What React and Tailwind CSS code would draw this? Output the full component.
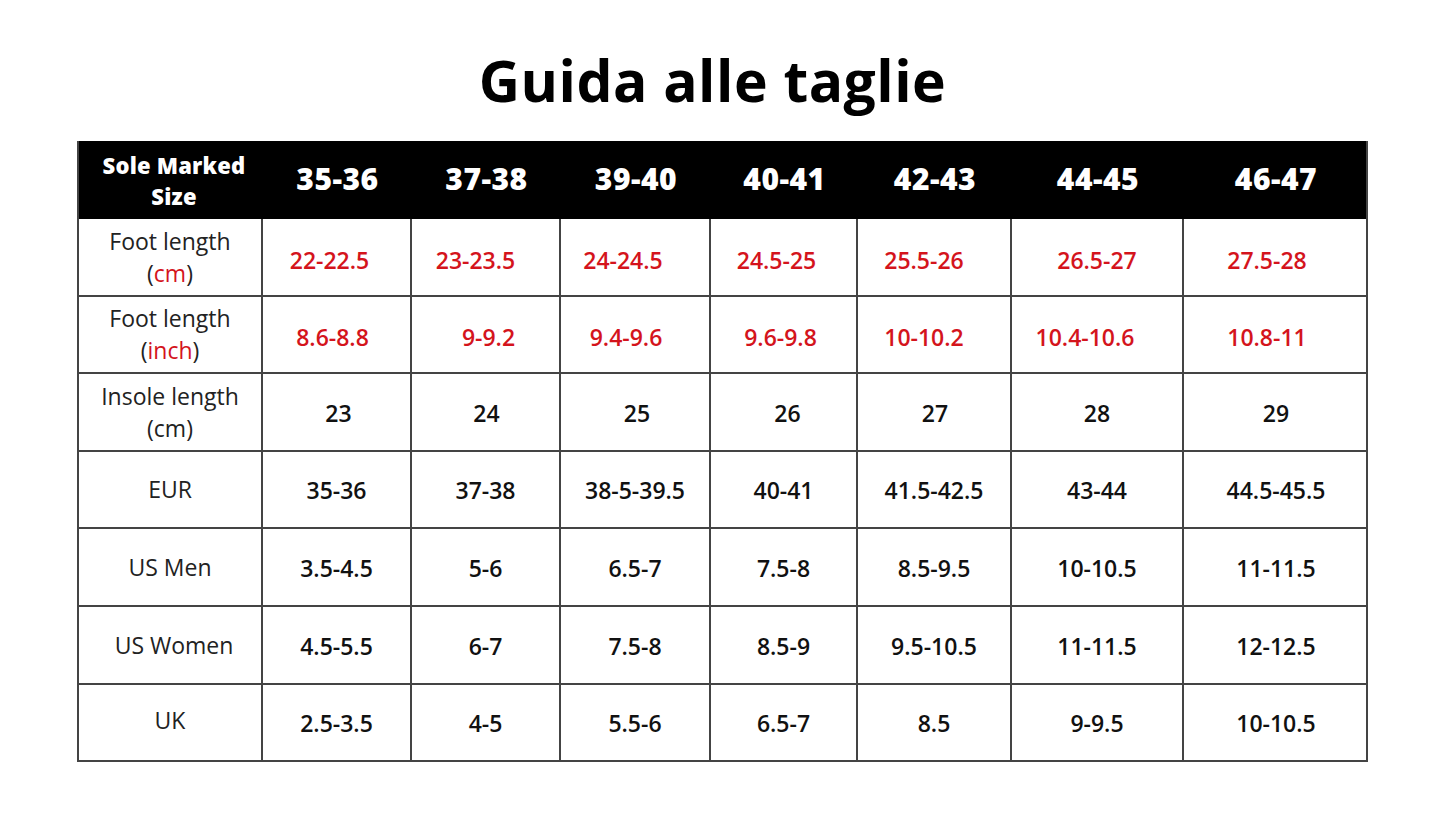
const sizes = ['35-36', '37-38', '39-40', '40-41', '42-43', '44-45', '46-47'];

// small nudges so values sit where they do in the printed chart
const cmShift = ['pr-[14px]', 'pr-[20px]', 'pr-[24px]', 'pr-[14px]', 'pr-[20px]', '', 'pr-[18px]'];
const inchShift = ['pr-[8px]', 'pl-[6px]', 'pr-[18px]', 'pr-[6px]', 'pr-[20px]', 'pr-[24px]', 'pr-[18px]'];
const plainShift = ['pl-[4px]', 'pl-[2px]', 'pl-[4px]', 'pl-[8px]', 'pl-[2px]', '', ''];

const rows = [
  {
    label: ['Foot length', '(', 'cm', ')'],
    red: true,
    shift: cmShift,
    values: ['22-22.5', '23-23.5', '24-24.5', '24.5-25', '25.5-26', '26.5-27', '27.5-28'],
  },
  {
    label: ['Foot length', '(', 'inch', ')'],
    red: true,
    shift: inchShift,
    values: ['8.6-8.8', '9-9.2', '9.4-9.6', '9.6-9.8', '10-10.2', '10.4-10.6', '10.8-11'],
  },
  { label: ['Insole length', '(cm)'], shift: plainShift, values: ['23', '24', '25', '26', '27', '28', '29'] },
  { label: ['EUR'], values: ['35-36', '37-38', '38-5-39.5', '40-41', '41.5-42.5', '43-44', '44.5-45.5'] },
  { label: ['US Men'], values: ['3.5-4.5', '5-6', '6.5-7', '7.5-8', '8.5-9.5', '10-10.5', '11-11.5'] },
  { label: ['US Women'], pad: 'pl-[8px]', values: ['4.5-5.5', '6-7', '7.5-8', '8.5-9', '9.5-10.5', '11-11.5', '12-12.5'] },
  { label: ['UK'], pad: 'pb-[4px]', values: ['2.5-3.5', '4-5', '5.5-6', '6.5-7', '8.5', '9-9.5', '10-10.5'] },
];

const grid = 'grid grid-cols-[184px_149px_149px_150px_147px_154px_172px_184px]';

function Label({ label }) {
  if (label.length === 4) {
    return (
      <div className="flex flex-col items-center leading-[32px]">
        <span>{label[0]}</span>
        <span>
          {label[1]}
          <span className="text-[#d4141c]">{label[2]}</span>
          {label[3]}
        </span>
      </div>
    );
  }
  if (label.length === 2) {
    return (
      <div className="flex flex-col items-center leading-[32px]">
        <span>{label[0]}</span>
        <span>{label[1]}</span>
      </div>
    );
  }
  return <span>{label[0]}</span>;
}

export default function App() {
  return (
    <div className="w-[1445px] h-[813px] bg-white overflow-hidden font-['Open_Sans',sans-serif]">
      <h1 className="pt-[44px] pr-[20px] h-[141px] text-center text-[57px] leading-[72px] font-bold text-black tracking-[0.5px]">
        Guida alle taglie
      </h1>
      <div className="ml-[77px] w-[1291px] border-l-2 border-r-2 border-[#444]">
        <div className={`${grid} h-[78px] bg-black text-white font-extrabold`}>
          <div className="flex flex-col items-center justify-center pt-[2px] pl-[6px] text-[22px] leading-[31px] tracking-[0.2px]">
            <span>Sole Marked</span>
            <span>Size</span>
          </div>
          {sizes.map((s) => (
            <div key={s} className="flex items-center justify-center pb-[3px] text-[30px] tracking-[0.5px]">
              {s}
            </div>
          ))}
        </div>
        {rows.map((r, i) => (
          <div key={i} className={`${grid} h-[77.6px] border-b-2 border-[#444] text-[23px]`}>
            <div className={`flex items-center justify-center border-r-2 border-[#444] text-[#222] ${r.pad || ''}`}>
              <Label label={r.label} />
            </div>
            {r.values.map((v, j) => (
              <div
                key={j}
                className={`flex items-center justify-center font-semibold ${r.red ? 'pt-[6px]' : 'pt-[2px]'} ${r.shift ? r.shift[j] : ''} ${j < 6 ? 'border-r-2 border-[#444]' : ''} ${r.red ? 'text-[#d4141c]' : 'text-[#111]'}`}
              >
                {v}
              </div>
            ))}
          </div>
        ))}
      </div>
    </div>
  );
}
